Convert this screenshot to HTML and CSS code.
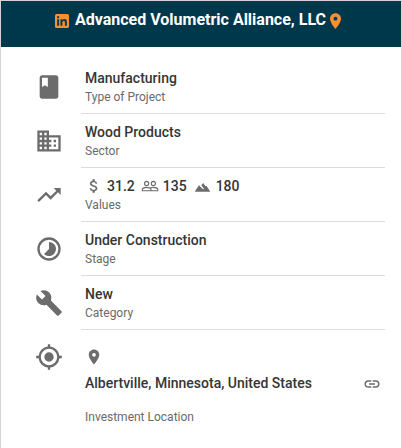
FILE: index.html
```html
<!DOCTYPE html>
<html lang="en">
<head>
<meta charset="utf-8">
<title>Advanced Volumetric Alliance, LLC</title>
<link rel="stylesheet" href="styles.css">
</head>
<body>
<main class="card">
  <header class="header">
    <svg class="linkedin" viewBox="0 0 14 14"><rect width="14" height="14" rx="1.6" fill="#f7902f"/><path fill="#123a48" d="M2.1 5.3h2v6.5h-2zM3.1 2.1a1.15 1.15 0 1 1 0 2.3 1.15 1.15 0 0 1 0-2.3zM5.4 5.3h1.9v.9c.4-.7 1.1-1.1 2-1.1 2 0 2.6 1.2 2.6 3.1v3.6h-2V8.600c0-.9-.1-1.700-1.100-1.700-1.100 0-1.400.8-1.400 1.700v3.200h-2z"/></svg>
    <h1 class="title">Advanced Volumetric Alliance, LLC</h1>
    <svg class="pin" viewBox="5 2 14 20"><path d="M12 2C8.130 2 5 5.130 5 9c0 5.250 7 13 7 13s7-7.750 7-13c0-3.870-3.130-7-7-7zm0 9.500a2.500 2.500 0 1 1 0-5 2.500 2.500 0 0 1 0 5z"/></svg>
  </header>
  <section class="list">
    <div class="row">
      <svg class="icon" viewBox="0 0 24 24"><path d="M18 2H6c-1.100 0-2 .9-2 2v16c0 1.100.9 2 2 2h12c1.100 0 2-.9 2-2V4c0-1.100-.9-2-2-2zM6 4h5v8l-2.500-1.500L6 12V4z"/></svg>
      <div class="body"><div class="value">Manufacturing</div><div class="label">Type of Project</div></div>
    </div>
    <div class="row">
      <svg class="icon" viewBox="0 0 24 24"><path d="M12 7V3H2v18h20V7H12zM6 19H4v-2h2v2zm0-4H4v-2h2v2zm0-4H4V9h2v2zm0-4H4V5h2v2zm4 12H8v-2h2v2zm0-4H8v-2h2v2zm0-4H8V9h2v2zm0-4H8V5h2v2zm10 12h-8v-2h2v-2h-2v-2h2v-2h-2V9h8v10zm-2-8h-2v2h2v-2zm0 4h-2v2h2v-2z"/></svg>
      <div class="body"><div class="value">Wood Products</div><div class="label">Sector</div></div>
    </div>
    <div class="row">
      <svg class="icon" viewBox="0 0 24 24"><path d="M16 6l2.290 2.290-4.880 4.880-4-4L2 16.590 3.410 18l6-6 4 4 6.300-6.290L22 12V6z"/></svg>
      <div class="body">
        <div class="value stats">
          <svg class="small dollar" viewBox="0 0 24 24"><path d="M11.800 10.900c-2.270-.59-3-1.200-3-2.150 0-1.090 1.010-1.850 2.700-1.850 1.780 0 2.440.85 2.500 2.100h2.210c-.07-1.720-1.120-3.300-3.210-3.810V3h-3v2.160c-1.940.42-3.500 1.680-3.500 3.610 0 2.310 1.910 3.460 4.700 4.130 2.500.6 3 1.480 3 2.410 0 .69-.49 1.790-2.700 1.790-2.060 0-2.870-.92-2.980-2.100h-2.200c.12 2.190 1.760 3.420 3.680 3.830V21h3v-2.150c1.950-.37 3.500-1.500 3.500-3.550 0-2.840-2.430-3.810-4.700-4.400z"/></svg>
          <span class="money">31.2</span>
          <svg class="small people" viewBox="0 0 24 24"><path d="M16.500 13c-1.200 0-3.070.34-4.500 1-1.430-.67-3.300-1-4.500-1C5.330 13 1 14.080 1 16.250V19h22v-2.750c0-2.170-4.330-3.250-6.500-3.250zm-4 4.500h-10v-1.250c0-.54 2.560-1.750 5-1.750s5 1.210 5 1.750v1.250zm9 0H14v-1.250c0-.46-.2-.86-.52-1.220.88-.3 1.960-.53 3.020-.53 2.440 0 5 1.210 5 1.750v1.250zM7.500 12a3.500 3.500 0 1 0 0-7 3.500 3.500 0 0 0 0 7zm0-5.500a2 2 0 1 1 0 4 2 2 0 0 1 0-4zm9 5.500a3.500 3.500 0 1 0 0-7 3.500 3.500 0 0 0 0 7zm0-5.500a2 2 0 1 1 0 4 2 2 0 0 1 0-4z"/></svg>
          <span class="jobs">135</span>
          <svg class="small terrain" viewBox="0 0 24 24"><path d="M13 5.500L10.300 8.700l3.700 5.200-1 .8L7 8.800 1 18h22l-5.200-8.200-1.600.6z"/></svg>
          <span class="acres">180</span>
        </div>
        <div class="label">Values</div>
      </div>
    </div>
    <div class="row">
      <svg class="icon" viewBox="0 0 24 24"><path d="M16.240 7.760C15.070 6.590 13.540 6 12 6v6l-4.240 4.240c2.340 2.340 6.140 2.340 8.490 0 2.340-2.340 2.340-6.140-.01-8.480zM12 2a10 10 0 1 0 0 20 10 10 0 0 0 0-20zm0 18a8 8 0 1 1 0-16 8 8 0 0 1 0 16z"/></svg>
      <div class="body"><div class="value">Under Construction</div><div class="label">Stage</div></div>
    </div>
    <div class="row">
      <svg class="icon" viewBox="0 0 24 24"><path d="M22.700 19l-9.100-9.100c.9-2.300.4-5-1.500-6.900-2-2-5-2.400-7.400-1.300L9 6 6 9 1.600 4.700C.4 7.100.9 10.100 2.900 12.100c1.900 1.900 4.600 2.400 6.900 1.500l9.100 9.100c.4.4 1 .4 1.400 0l2.300-2.300c.5-.4.5-1.100.1-1.400z"/></svg>
      <div class="body"><div class="value">New</div><div class="label">Category</div></div>
    </div>
    <div class="row location">
      <svg class="icon" viewBox="0 0 24 24"><path d="M12 8a4 4 0 1 0 0 8 4 4 0 0 0 0-8zm8.940 3A8.994 8.994 0 0 0 13 3.060V1h-2v2.060A8.994 8.994 0 0 0 3.060 11H1v2h2.060A8.994 8.994 0 0 0 11 20.940V23h2v-2.060A8.994 8.994 0 0 0 20.940 13H23v-2h-2.060zM12 19a7 7 0 1 1 0-14 7 7 0 0 1 0 14z"/></svg>
      <div class="body">
        <svg class="small place" viewBox="0 0 24 24"><path d="M12 2C8.130 2 5 5.130 5 9c0 5.250 7 13 7 13s7-7.750 7-13c0-3.870-3.130-7-7-7zm0 9.500a2.500 2.500 0 1 1 0-5 2.500 2.500 0 0 1 0 5z"/></svg>
        <div class="place-line">
          <div class="value">Albertville, Minnesota, United States</div>
          <svg class="small link" viewBox="0 0 24 24"><path d="M3.900 12c0-1.710 1.390-3.100 3.100-3.100h4V7H7a5 5 0 0 0 0 10h4v-1.900H7c-1.710 0-3.100-1.390-3.100-3.100zM8 13h8v-2H8v2zm9-6h-4v1.900h4a3.100 3.100 0 0 1 0 6.200h-4V17h4a5 5 0 0 0 0-10z"/></svg>
        </div>
        <div class="label">Investment Location</div>
      </div>
    </div>
  </section>
</main>
</body>
</html>
```
FILE: styles.css
```css
* { box-sizing: border-box; }

body {
  margin: 0;
  background: #fff;
  font-family: Roboto, "Liberation Sans", sans-serif;
  color: #353535;
}

.card {
  height: 448px;
  overflow: hidden;
  border: solid #d3d3d3;
  border-width: 1px 1px 0;
}

.header {
  display: flex;
  align-items: center;
  height: 46px;
  padding: 0 0 8px 54px;
  background: #00384b;
  color: #fff;
}

.linkedin { width: 14px; height: 14px; margin: 1px 6px 0 0; }
.title { margin: 0; font-size: 16px; font-weight: 700; line-height: 20px; white-space: nowrap; }
.pin { width: 11px; height: 16px; margin: 2px 0 0 3.5px; fill: #f7902f; }

.list { padding: 13px 16px 0 34px; }

.row { display: flex; align-items: center; height: 54px; }
.icon { flex: none; width: 28px; height: 28px; margin-right: 18px; fill: #6c6c6c; }

.body {
  flex: 1;
  height: 54px;
  padding: 8px 4px 0;
  border-bottom: 1px solid #dcdcdc;
}

.value { font-size: 14px; font-weight: 500; line-height: 20px; white-space: nowrap; }
.label { font-size: 12px; line-height: 18px; color: #6a6a6a; }

.stats { display: flex; align-items: center; }
.small { display: block; flex: none; width: 18px; height: 18px; fill: #6c6c6c; }
.money { margin: 0 6.5px 0 4px; }
.jobs { margin: 0 7px 0 3.5px; }
.stats .terrain { width: 17px; height: 17px; margin-top: 2px; }
.acres { margin-left: 5px; }

.location { height: 118px; align-items: flex-start; }
.location .icon { margin-top: 13px; }
.location .body { height: 118px; padding-top: 18px; border-bottom: 0; }
.place-line { display: flex; justify-content: space-between; align-items: center; margin: 7px 0 15px; }
.link { margin-top: 1px; }
```
